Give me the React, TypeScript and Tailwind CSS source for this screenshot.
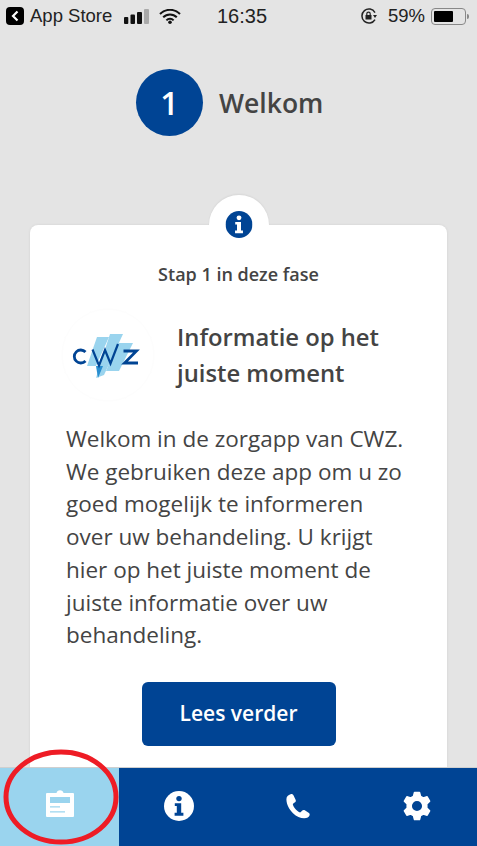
import React from 'react';

const InfoIcon: React.FC<{ size: number; bg: string; fg: string }> = ({ size, bg, fg }) => (
  <svg width={size} height={size} viewBox="0 0 30 30">
    <circle cx="15" cy="15" r="15" fill={bg} />
    <circle cx="15" cy="7.6" r="2.7" fill={fg} />
    <path d="M10.8 12.2h6.400v9.600h2.200v2.900h-8.800v-2.900h2.200v-6.700h-2z" fill={fg} />
  </svg>
);

const ClipboardIcon = () => (
  <svg width="28" height="28" viewBox="0 0 28 28">
    <path
      fill="#fff"
      fillRule="evenodd"
      d="M1 4h9.500a3.600 3.600 0 0 1 7 0H27a1 1 0 0 1 1 1v22a1 1 0 0 1-1 1H1a1 1 0 0 1-1-1V5a1 1 0 0 1 1-1zM4 8v6h20V8zM4 17.200v1.300h10v-1.300zM4 22.200v1.300h15v-1.300z"
    />
  </svg>
);

const PhoneIcon = () => (
  <svg width="26" height="26" viewBox="0 0 26 26">
    <path
      fill="#fff"
      d="M5.600 1.200C3.300 1.800 1.300 3.600 1.400 6.600c.2 5.400 3 10.200 6.600 13.600 3.400 3.200 7.400 5 11.200 5 2.800 0 4.800-1 5.400-3 .3-1.100-.1-1.900-1-2.500l-3.800-2.400c-.9-.5-1.800-.4-2.500.3l-1.500 1.500c-.4.400-.9.400-1.400.2-1.600-.8-3.300-2.300-4.600-4-.9-1.200-1.600-2.500-1.900-3.500-.1-.5 0-.9.400-1.200l1.700-1.300c.8-.6 1-1.500.7-2.400L8.700 2.700c-.5-1.300-1.800-1.800-3.100-1.500z"
    />
  </svg>
);

const GearIcon = () => (
  <svg width="30" height="30" viewBox="0 0 30 30">
    <path
      fill="#fff"
      stroke="#fff"
      strokeWidth="1.500"
      strokeLinejoin="round"
      fillRule="evenodd"
      d="M12.500 1.500h5l1 3.800 2.800 1.600 3.800-1.100 2.500 4.400-2.800 2.700v4.200l2.800 2.700-2.500 4.400-3.800-1.100-2.800 1.600-1 3.800h-5l-1-3.800-2.800-1.600-3.800 1.100-2.500-4.400 2.800-2.700v-4.200l-2.800-2.700 2.500-4.400 3.800 1.100 2.800-1.600zM15 9.200a5.800 5.800 0 1 0 0 11.600 5.800 5.800 0 0 0 0-11.600z"
    />
  </svg>
);

const CwzLogo = () => (
  <svg width="80" height="54" viewBox="0 0 80 54" className="shrink-0 overflow-visible">
    <circle cx="42" cy="27" r="46" fill="none" stroke="#fdfdfd" />
    <path d="M31 9h12L30 38h-9z" fill="#9ad4ee" />
    <path d="M44 6h13L38 47l-8 3 2-7z" fill="#9ad4ee" />
    <path d="M52 15h15L53 43H40z" fill="#9ad4ee" />
    <path d="M30 38h7l-5 12z" fill="#2b8fd0" />
    <path d="M26.500 21.500 33 37.500l6-15.500 5.500 13.500L52 16" fill="none" stroke="#004494" strokeWidth="2.200" />
    <path d="M19.500 24a6.500 6.500 0 1 0 0 9" fill="none" stroke="#004494" strokeWidth="2.800" />
    <path d="M57.500 23h13l-12 12h13.500" fill="none" stroke="#004494" strokeWidth="2.800" />
  </svg>
);

const StatusBar = () => (
  <div className="h-[30px] flex items-center pt-[2px] pl-[6px] pr-[8px] text-[18.500px] text-[#222] font-['Liberation_Sans',sans-serif]">
    <div className="flex items-center w-[211px] shrink-0">
      <div className="w-[18px] h-[18px] bg-black rounded-[4px] flex items-center justify-center">
        <svg width="10" height="12" viewBox="0 0 10 12"><path d="M7.500 1.500 3 6l4.500 4.500" fill="none" stroke="#fff" strokeWidth="2.200" /></svg>
      </div>
      <span className="ml-[6px] whitespace-nowrap">App Store</span>
      <svg className="ml-[12px] shrink-0" width="25" height="15" viewBox="0 0 25 15">
        <rect x="0" y="8" width="4.300" height="7" rx="1" fill="#111" />
        <rect x="6.500" y="5.500" width="4.500" height="9.500" rx="1" fill="#111" />
        <rect x="13" y="3" width="5" height="12" rx="1" fill="#111" />
        <rect x="20" y="0" width="5" height="15" rx="1" fill="#aaa" />
      </svg>
      <svg className="ml-[10px] shrink-0" width="22" height="15" viewBox="0 0 22 15">
        <path d="M1 5a14 14 0 0 1 20 0M4.200 8.300a9.500 9.500 0 0 1 13.600 0M7.400 11.400a5 5 0 0 1 7.200 0" fill="none" stroke="#111" strokeWidth="2" />
        <circle cx="11" cy="13.200" r="1.800" fill="#111" />
      </svg>
    </div>
    <span className="text-[20px]">16:35</span>
    <div className="flex items-center ml-auto">
      <svg width="18" height="18" viewBox="0 0 18 18">
        <path d="M15 12.500A7 7 0 1 1 15 5.500" fill="none" stroke="#222" strokeWidth="1.500" />
        <path d="M13 8h4l-2 3z" fill="#222" />
        <rect x="5.500" y="8" width="6" height="4.500" fill="#222" />
        <path d="M6.800 8V6.800a1.700 1.700 0 0 1 3.400 0V8" fill="none" stroke="#222" strokeWidth="1.200" />
      </svg>
      <span className="ml-[10px]">59%</span>
      <div className="ml-[6px] w-[35px] h-[17px] border border-[#888] rounded-[4px] p-[2px]">
        <div className="h-full w-[19px] bg-black rounded-[1px]" />
      </div>
      <div className="ml-[1px] w-[2px] h-[5px] bg-[#888] rounded-r" />
    </div>
  </div>
);

export default function App() {
  return (
    <div className="relative h-[846px] w-[477px] overflow-hidden bg-[#e4e4e4] flex flex-col font-['Open_Sans',sans-serif] text-[#444]">
      <StatusBar />

      <main className="flex-1 min-h-0 overflow-hidden px-[30px] flex flex-col">
        <div className="flex items-center pl-[106px] pt-[39px] shrink-0">
          <div className="w-[67px] h-[67px] rounded-full bg-[#004494] text-white flex items-center justify-center text-[32px] font-semibold">1</div>
          <h1 className="ml-[16px] mt-[2px] text-[26.500px] font-semibold">Welkom</h1>
        </div>

        <div className="relative mt-[89px] flex-1 bg-white rounded-t-[8px] pl-[36px] pr-[24px] shadow-[0_0_3px_rgba(0,0,0,0.08)]">
          <div className="absolute left-1/2 -translate-x-1/2 -top-[30px] w-[60px] h-[60px] rounded-full bg-white shadow-[0_-1px_2px_rgba(0,0,0,0.06)]" />
          <div className="absolute left-1/2 -translate-x-1/2 top-0 w-[70px] h-[32px] bg-white" />
          <div className="absolute left-1/2 -translate-x-1/2 -top-[14px]">
            <InfoIcon size={27} bg="#004494" fg="#fff" />
          </div>

          <p className="pt-[38px] pr-[12px] text-center text-[18px] font-semibold leading-[22px]">Stap 1 in deze fase</p>

          <div className="flex items-center mt-[34px]">
            <CwzLogo />
            <h2 className="ml-[31px] text-[23.800px] leading-[36px] font-semibold">Informatie op het juiste moment</h2>
          </div>

          <p className="mt-[32px] max-w-[340px] text-[22.500px] leading-[32.700px]">
            Welkom in de zorgapp van CWZ. We gebruiken deze app om u zo goed mogelijk te informeren over uw behandeling. U krijgt hier op het juiste moment de juiste informatie over uw behandeling.
          </p>

          <div className="pr-[12px]">
            <button className="block mx-auto mt-[30px] w-[194px] h-[64px] rounded-[6px] bg-[#004494] text-white text-[21px] font-semibold">Lees verder</button>
          </div>
        </div>
      </main>

      <nav className="shrink-0 h-[79px] flex bg-[#004494] border-t border-[#cfcfcf]">
        <div className="flex-1 bg-[#9ad4ee] flex items-center justify-center pb-[8px]"><ClipboardIcon /></div>
        <div className="flex-1 flex items-center justify-center pb-[2px]"><InfoIcon size={30} bg="#fff" fg="#004494" /></div>
        <div className="flex-1 flex items-center justify-center pb-[3px]"><PhoneIcon /></div>
        <div className="flex-1 flex items-center justify-center pb-[2px]"><GearIcon /></div>
      </nav>

      <svg className="absolute left-0 top-[746px]" width="124" height="100" viewBox="0 0 124 100">
        <ellipse cx="61" cy="51" rx="55" ry="45" fill="none" stroke="#ee1c25" strokeWidth="5" />
      </svg>
    </div>
  );
}
